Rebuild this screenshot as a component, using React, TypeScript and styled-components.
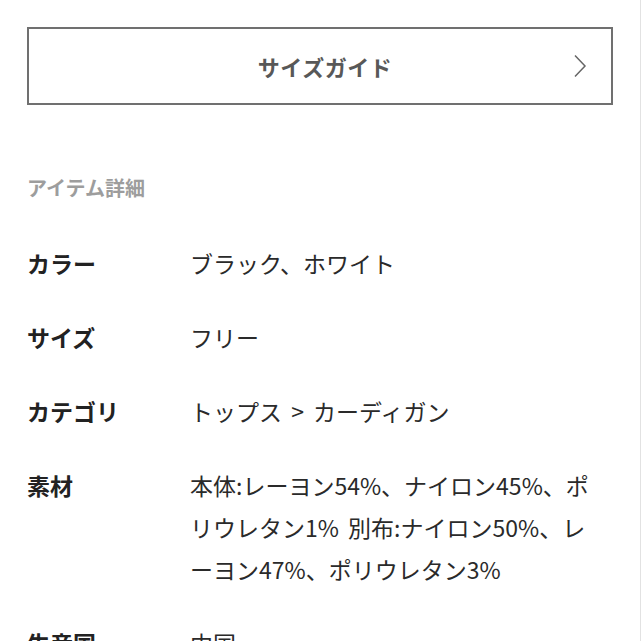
import React from 'react';
import styled, { createGlobalStyle } from 'styled-components';

const GlobalStyle = createGlobalStyle`
  html, body {
    margin: 0;
    padding: 0;
    background: #fff;
  }
  body {
    font-family: "Noto Sans CJK JP", "Noto Sans", sans-serif;
    color: #222;
    overflow: hidden;
  }
`;

interface Detail {
  label: string;
  lines: string[]; // 表示上の改行ごと
}

const details: Detail[] = [
  { label: 'カラー', lines: ['ブラック、ホワイト'] },
  { label: 'サイズ', lines: ['フリー'] },
  { label: 'カテゴリ', lines: ['トップス > カーディガン'] },
  {
    label: '素材',
    lines: [
      '本体:レーヨン54%、ナイロン45%、ポ',
      'リウレタン1% 別布:ナイロン50%、レ',
      'ーヨン47%、ポリウレタン3%',
    ],
  },
  { label: '生産国', lines: ['中国'] },
];

const App: React.FC = () => {
  return (
    <>
      <GlobalStyle />
      <Page>
        <GuideButton type="button">
          <GuideLabel>サイズガイド</GuideLabel>
          <Chevron width="14" height="24" viewBox="0 0 14 24">
            <polyline points="2,1.5 12,12 2,22.5" />
          </Chevron>
        </GuideButton>

        <SectionTitle>アイテム詳細</SectionTitle>

        <DetailList>
          {details.map((d) => (
            <DetailRow key={d.label}>
              <DetailLabel>{d.label}</DetailLabel>
              <DetailValue>
                {d.lines.map((line) => (
                  <ValueLine key={line}>{line}</ValueLine>
                ))}
              </DetailValue>
            </DetailRow>
          ))}
        </DetailList>
      </Page>
    </>
  );
};

export default App;

const Page = styled.div`
  box-sizing: border-box;
  width: 641px;
  height: 641px;
  padding: 27px 28px 0 27px;
  border-right: 1px solid #e2e2e2;
  overflow: hidden;
`;

const GuideButton = styled.button`
  position: relative;
  display: flex;
  align-items: center;
  justify-content: center;

  box-sizing: border-box;
  width: 586px;
  height: 78px;
  margin: 0;
  padding: 0;

  background: #fff;
  border: 2px solid #707070;
  cursor: pointer;
`;

const GuideLabel = styled.span`
  margin-left: 10px;
  color: #585858;
  font-family: "Noto Sans CJK JP", sans-serif;
  font-size: 22px;
  font-weight: 700;
  letter-spacing: 0.5px;
`;

const Chevron = styled.svg`
  position: absolute;
  right: 24px;
  top: 25px;

  fill: none;
  stroke: #666;
  stroke-width: 1.5;
`;

const SectionTitle = styled.h2`
  margin: 69px 0 0;
  color: #9d9d9d;
  font-family: "Noto Sans CJK JP", sans-serif;
  font-size: 20px;
  font-weight: 700;
  line-height: 28px;
`;

const DetailList = styled.dl`
  display: flex;
  flex-direction: column;
  gap: 32px;
  margin: 40px 0 0;
`;

const DetailRow = styled.div`
  display: grid;
  grid-template-columns: 163px 1fr;
`;

const DetailLabel = styled.dt`
  color: #222;
  font-size: 23px;
  font-weight: 700;
  line-height: 42px;
`;

const DetailValue = styled.dd`
  margin: 0;
  color: #2a2a2a;
  font-size: 23px;
  font-weight: 400;
  line-height: 42px;
  word-spacing: 4px;
`;

const ValueLine = styled.span`
  display: block;
  white-space: nowrap;

  &:not(:first-child) {
    margin-top: 0;
  }
`;
